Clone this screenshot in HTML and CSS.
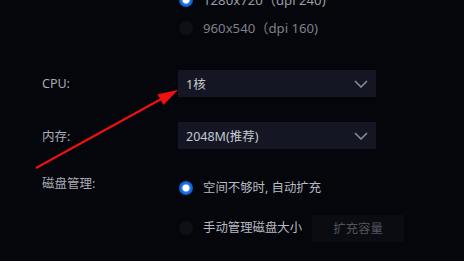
FILE: index.html
```html
<!DOCTYPE html>
<html>
<head>
<meta charset="utf-8">
<link rel="stylesheet" href="styles.css">
</head>
<body>
<div class="page">
  <div class="row res">
    <div class="label"></div>
    <div class="options">
      <div class="opt"><span class="radio on"></span><span class="opt-text">1280x720（dpi 240)</span></div>
      <div class="opt"><span class="radio"></span><span class="opt-text dim">960x540（dpi 160)</span></div>
    </div>
  </div>
  <div class="row cpu">
    <div class="label mid">CPU:</div>
    <div class="select"><span>1核</span><svg class="chev" width="14" height="8" viewBox="0 0 14 8"><path d="M1 1 L7 7 L13 1" fill="none" stroke="#8b8f9c" stroke-width="1.5"/></svg></div>
  </div>
  <div class="row mem">
    <div class="label mid">内存:</div>
    <div class="select"><span>2048M(推荐)</span><svg class="chev" width="14" height="8" viewBox="0 0 14 8"><path d="M1 1 L7 7 L13 1" fill="none" stroke="#8b8f9c" stroke-width="1.5"/></svg></div>
  </div>
  <div class="row disk">
    <div class="label top">磁盘管理:</div>
    <div class="options disk-opts">
      <div class="opt"><span class="radio on"></span><span class="opt-text bright">空间不够时, 自动扩充</span></div>
      <div class="opt"><span class="radio"></span><span class="opt-text bright">手动管理磁盘大小</span><button class="btn">扩充容量</button></div>
    </div>
  </div>
</div>
<svg class="arrow" width="464" height="261" viewBox="0 0 464 261">
  <line x1="36" y1="168" x2="164" y2="97.5" stroke="#f01010" stroke-width="2"/>
  <polygon points="178,90 163.4,104.9 157.6,94.3" fill="#f01010"/>
</svg>
</body>
</html>
```
FILE: styles.css
```css
html, body {
  margin: 0;
  padding: 0;
}
body {
  width: 464px;
  height: 261px;
  overflow: hidden;
  background: #05060b;
  font-family: "Noto Sans", "Noto Sans CJK SC", sans-serif;
  font-size: 12.5px;
  color: #b4b7bf;
  position: relative;
}
.page {
  padding-left: 42px;
  margin-top: -7px;
}
.row {
  display: grid;
  grid-template-columns: 136px 198px;
}
.label {
  color: #a9acb4;
}
.label.mid {
  display: flex;
  align-items: center;
}
.label.top {
  line-height: 14px;
}
.options {
  display: flex;
  flex-direction: column;
  gap: 14px;
}
.opt {
  display: flex;
  align-items: center;
  height: 14px;
  white-space: nowrap;
}
.radio {
  width: 14px;
  height: 14px;
  border-radius: 50%;
  background: #0e1018;
  flex: none;
  margin-left: 1px;
  margin-right: 10px;
  box-sizing: border-box;
}
.radio.on {
  background: radial-gradient(circle, #ffffff 0 3px, #2f80ec 4px, #0c5fd4 6px);
}
.opt-text {
  color: #9a9da6;
  line-height: 14px;
  font-size: 13.2px;
}
.opt-text.dim {
  color: #7d808a;
}
.opt-text.bright {
  color: #b7bac2;
  font-size: 12.4px;
}
.cpu {
  margin-top: 35px;
}
.mem {
  margin-top: 25px;
}
.select {
  height: 27px;
  background: #141723;
  display: flex;
  align-items: center;
  justify-content: space-between;
  padding: 0 8px;
  color: #c6c8cf;
}
.disk {
  margin-top: 32px;
  grid-template-columns: 136px 286px;
}
.disk .label {
  margin-top: -4px;
}
.disk-opts {
  gap: 0;
}
.disk-opts .opt + .opt {
  margin-top: 26px;
}
.btn {
  margin-left: 10px;
  width: 92px;
  height: 27px;
  flex: none;
  border: none;
  background: #0b0c12;
  color: #51545d;
  font-family: "Noto Sans CJK SC", sans-serif;
  font-size: 12.4px;
  padding: 0;
}
.arrow {
  position: absolute;
  left: 0;
  top: 0;
  pointer-events: none;
}
```
